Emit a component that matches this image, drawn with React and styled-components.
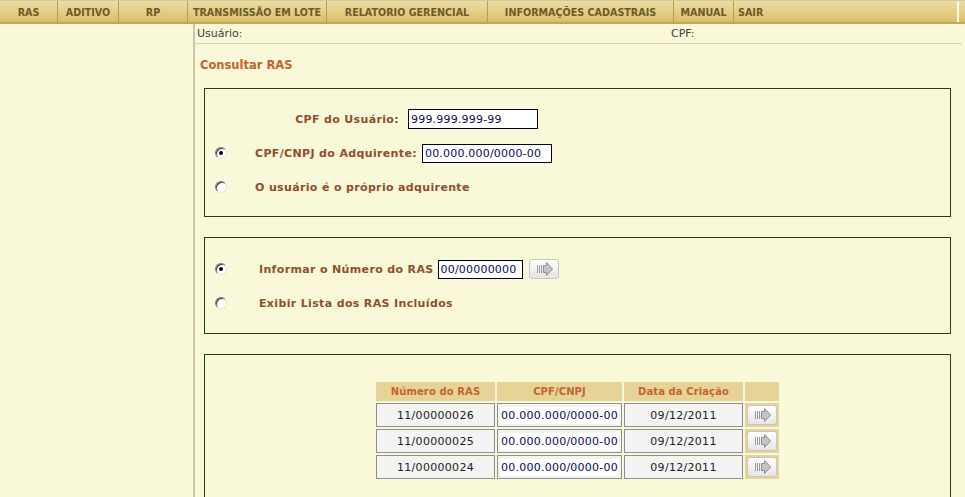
import React from "react";
import styled, { createGlobalStyle } from "styled-components";

const Global = createGlobalStyle`
  html, body { margin: 0; padding: 0; }
  body {
    background: #f9f8d8;
    font-family: "DejaVu Sans", Verdana, sans-serif;
    overflow: hidden;
  }
`;

const Page = styled.div`
  width: 965px;
  height: 497px;
  overflow: hidden;
  display: flex;
  flex-direction: column;
`;

const MenuBar = styled.nav`
  display: flex;
  height: 21px;
  border-top: 1px solid #cec8a4;
  border-bottom: 2px solid #c2a653;
  background: linear-gradient(#ecdda3, #e2cd84 55%, #d7be68);
  flex-shrink: 0;
`;

const MenuItem = styled.div`
  width: ${(p) => p.$w}px;
  flex-shrink: 0;
  display: flex;
  align-items: center;
  justify-content: ${(p) => (p.$left ? "flex-start" : "center")};
  padding-left: ${(p) => (p.$left ? 4 : 0)}px;
  padding-top: 1px;
  box-sizing: border-box;
  border-left: ${(p) => (p.$first ? "none" : "1px solid #b89d4e")};
  font-size: 9.6px;
  font-weight: bold;
  color: #6d5a28;
  white-space: nowrap;
`;

const MenuEnd = styled.div`
  flex: 1;
  border-left: 2px solid #fffbe8;
  margin-left: auto;
  max-width: 7px;
`;

const Body = styled.div`
  flex: 1;
  display: grid;
  grid-template-columns: 195px 1fr;
`;

const Sidebar = styled.aside`
  border-right: 2px solid #cbc6a6;
`;

const Main = styled.main`
  display: flex;
  flex-direction: column;
`;

const InfoBar = styled.div`
  display: grid;
  grid-template-columns: 474px 1fr;
  height: 19px;
  align-items: center;
  margin-right: 3px;
  padding-left: 2px;
  border-bottom: 1px solid #dad3ad;
  font-size: 11px;
  color: #3c3c3c;
`;

const Colon = styled.span`
  color: #7a2a6a;
`;

const Content = styled.div`
  padding: 0 14px 0 9px;
  display: flex;
  flex-direction: column;
`;

const Title = styled.h1`
  margin: 14px 0 15px -4px;
  font-size: 11.5px;
  line-height: 15px;
  font-weight: bold;
  color: #c4622f;
`;

const Panel = styled.section`
  border: 1px solid #263f12;
  padding: ${(p) => p.$pad};
  margin-bottom: 20px;
  display: flex;
  flex-direction: column;
  gap: ${(p) => p.$gap || 14}px;
  flex-shrink: 0;
`;

const Row = styled.div`
  display: flex;
  align-items: center;
  height: 20px;
  padding-left: ${(p) => p.$indent || 0}px;
`;

const Label = styled.label`
  font-size: 11px;
  font-weight: bold;
  letter-spacing: 0.35px;
  color: #8f4f2f;
  white-space: nowrap;
  width: ${(p) => (p.$w ? `${p.$w}px` : "auto")};
  text-align: ${(p) => (p.$right ? "right" : "left")};
  margin-left: ${(p) => p.$ml || 0}px;
  margin-right: ${(p) => p.$mr || 0}px;
`;

const Radio = styled.input.attrs({ type: "radio" })`
  appearance: none;
  margin: 0;
  width: 12px;
  height: 12px;
  border-radius: 50%;
  background: #fff;
  border: 1px solid;
  border-color: #7d7d7d #e4e4e4 #e4e4e4 #7d7d7d;
  box-shadow: inset 1px 1px 0 #404040;
  box-sizing: border-box;
  position: relative;
  flex-shrink: 0;
  &:checked::after {
    content: "";
    position: absolute;
    left: 3px;
    top: 3px;
    width: 4px;
    height: 4px;
    border-radius: 50%;
    background: #000;
  }
`;

const TextInput = styled.input`
  box-sizing: border-box;
  width: ${(p) => p.$w}px;
  height: ${(p) => p.$h || 20}px;
  border: 1px solid #000;
  background: #fff;
  padding: 0 2px;
  font-family: "DejaVu Sans", Verdana, sans-serif;
  font-size: 11px;
  letter-spacing: 0.2px;
  color: #0a0a5a;
  outline: none;
`;

const ArrowBtn = styled.button`
  box-sizing: border-box;
  width: 30px;
  height: 20px;
  margin-left: ${(p) => p.$ml || 0}px;
  padding: 0;
  border: 1px solid #c6c6c6;
  border-radius: 3px;
  background: linear-gradient(#fefefe, #e5e5e5);
  display: flex;
  align-items: center;
  justify-content: center;
  cursor: pointer;
`;

const Arrow = () => (
  <svg width="20" height="14" viewBox="0 0 20 14">
    <g stroke="#9a9a9a" strokeWidth="1">
      <line x1="3.5" y1="3" x2="3.5" y2="11" />
      <line x1="5.5" y1="3" x2="5.5" y2="11" />
      <line x1="7.5" y1="3" x2="7.5" y2="11" />
    </g>
    <polygon
      points="9.5,3.5 12.5,3.5 12.5,0.5 18.5,7 12.5,13.5 12.5,10.5 9.5,10.5"
      fill="#c4c4c4"
      stroke="#8e8e8e"
      strokeWidth="1"
    />
  </svg>
);

const Table = styled.table`
  border-collapse: separate;
  border-spacing: 2px;
  margin: 0 auto;
`;

const Th = styled.th`
  background: #e6d398;
  color: #c6632f;
  font-size: 10px;
  font-weight: bold;
  letter-spacing: 0.1px;
  height: 19px;
  padding: 0;
  width: ${(p) => p.$w}px;
  text-align: center;
`;

const Td = styled.td`
  box-sizing: border-box;
  height: 24px;
  padding: 0;
  text-align: center;
  font-size: 11px;
  letter-spacing: 0.3px;
  color: #222;
  background: #f3f3f3;
  border: 1px solid #8f8f8f;
`;

const BtnTd = styled.td`
  background: #e6d398;
  padding: 0 2px;
  height: 24px;
`;

const CellValue = styled.span`
  background: #fff;
  color: #0a0a5a;
  letter-spacing: 0.25px;
  padding: 2px 1px;
`;

const rows = [
  ["11/00000026", "00.000.000/0000-00", "09/12/2011"],
  ["11/00000025", "00.000.000/0000-00", "09/12/2011"],
  ["11/00000024", "00.000.000/0000-00", "09/12/2011"],
];

const menu = [
  ["RAS", 57],
  ["ADITIVO", 61],
  ["RP", 69],
  ["TRANSMISSÃO EM LOTE", 139],
  ["RELATORIO GERENCIAL", 161],
  ["INFORMAÇÕES CADASTRAIS", 186],
  ["MANUAL", 60],
  ["SAIR", 224, true],
];

export default function App() {
  return (
    <>
      <Global />
      <Page>
        <MenuBar>
          {menu.map(([t, w, left], i) => (
            <MenuItem key={t} $w={w} $left={left} $first={i === 0}>
              {t}
            </MenuItem>
          ))}
          <MenuEnd />
        </MenuBar>
        <Body>
          <Sidebar />
          <Main>
            <InfoBar>
              <span>
                Usuário<Colon>:</Colon>
              </span>
              <span>
                CPF<Colon>:</Colon>
              </span>
            </InfoBar>
            <Content>
              <Title>Consultar RAS</Title>

              <Panel $pad="20px 0 19px">
                <Row>
                  <Label $w={194} $right $mr={9}>
                    CPF do Usuário:
                  </Label>
                  <TextInput $w={130} defaultValue="999.999.999-99" />
                </Row>
                <Row $indent={10}>
                  <Radio name="adq" defaultChecked />
                  <Label $ml={28} $mr={5}>
                    CPF/CNPJ do Adquirente:
                  </Label>
                  <TextInput $w={130} $h={19} defaultValue="00.000.000/0000-00" />
                </Row>
                <Row $indent={10}>
                  <Radio name="adq" />
                  <Label $ml={28}>O usuário é o próprio adquirente</Label>
                </Row>
              </Panel>

              <Panel $pad="21px 0 20px">
                <Row $indent={10}>
                  <Radio name="modo" defaultChecked />
                  <Label $ml={32} $mr={4}>
                    Informar o Número do RAS
                  </Label>
                  <TextInput $w={85} $h={19} defaultValue="00/00000000" />
                  <ArrowBtn $ml={6}>
                    <Arrow />
                  </ArrowBtn>
                </Row>
                <Row $indent={10}>
                  <Radio name="modo" />
                  <Label $ml={32}>Exibir Lista dos RAS Incluídos</Label>
                </Row>
              </Panel>

              <Panel $pad="25px 0 40px">
                <Table>
                  <thead>
                    <tr>
                      <Th $w={119}>Número do RAS</Th>
                      <Th $w={125}>CPF/CNPJ</Th>
                      <Th $w={119}>Data da Criação</Th>
                      <Th $w={34} />
                    </tr>
                  </thead>
                  <tbody>
                    {rows.map(([n, c, d]) => (
                      <tr key={n}>
                        <Td>{n}</Td>
                        <Td>
                          <CellValue>{c}</CellValue>
                        </Td>
                        <Td>{d}</Td>
                        <BtnTd>
                          <ArrowBtn>
                            <Arrow />
                          </ArrowBtn>
                        </BtnTd>
                      </tr>
                    ))}
                  </tbody>
                </Table>
              </Panel>
            </Content>
          </Main>
        </Body>
      </Page>
    </>
  );
}
